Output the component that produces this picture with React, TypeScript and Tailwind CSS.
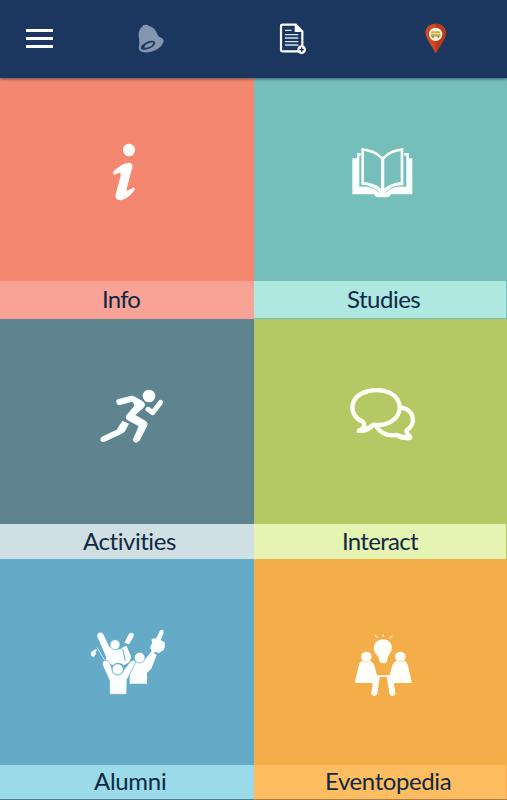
import type { ReactNode } from "react";

function InfoIcon() {
  return (
    <svg viewBox="0 0 210 240" className="ml-[90px] mt-[52px] h-20 w-[70px]" fill="#fffdf9">
      <ellipse cx="117" cy="60" rx="18" ry="19" />
      <path d="M68 127Q91 101 116 98Q129 98 127 112L110 176Q109 184 115 181L132 172L135 178Q120 202 97 210Q73 213 77 193L92 137Q93 125 86 129L72 135Z" />
    </svg>
  );
}

function BookIcon() {
  return (
    <svg viewBox="0 0 255 225" className="ml-[86px] mt-[57px] h-[75px] w-[85px]" fill="#fafffe">
      <path fillRule="evenodd" d="M64 39Q105 42 128 66Q150 42 190 39V150Q151 151 130 178H124Q104 151 64 149ZM72 48V141Q104 144 123 161V72Q101 51 72 48ZM182 48Q153 51 133 72V161Q151 144 182 141Z" />
      <path d="M51 54H62V62H58V155Q95 152 115 171Q127 181 139 171Q160 152 199 155V62H193V54H207V70H217V178H153Q150 187 140 187H115Q105 187 102 178H37V70H51Z" />
    </svg>
  );
}

function RunnerIcon() {
  return (
    <svg viewBox="0 0 255 210" className="ml-[90px] mt-[61px] h-[70px] w-[85px]" fill="none" stroke="#fbffff" strokeLinecap="round" strokeLinejoin="round">
      <circle cx="177" cy="48" r="19" fill="#fbffff" stroke="none" />
      <path d="M88 66L126 56L143 65" strokeWidth="18" />
      <path d="M123 49L153 61Q173 71 160 84L136 105L166 122Q177 129 170 140L148 184L128 180L146 139L113 121Q103 113 110 105L133 77Z" fill="#fbffff" stroke="none" />
      <path d="M162 137L138 179" strokeWidth="17" />
      <path d="M174 88L188 98L212 67" strokeWidth="15" />
      <path d="M97 122L117 131L105 154Q101 159 94 162L44 185Q31 188 31 177Q33 171 40 168L80 149Z" fill="#fbffff" stroke="none" />
    </svg>
  );
}

function ChatIcon() {
  return (
    <svg viewBox="0 0 255 210" className="ml-[86px] mt-[61px] h-[70px] w-[85px]" fill="none" stroke="#fdfff4" strokeWidth="13" strokeLinecap="round" strokeLinejoin="round">
      <path d="M183 82C224 90 230 130 200 151Q197 157 207 166L211 173Q191 177 171 165Q132 172 110 141" />
      <path d="M172 162L195 167L213 169L211 178Q191 181 174 174Z" fill="#fdfff4" strokeWidth="4" />
      <path d="M70 126C22 108 27 47 82 34C137 22 179 44 179 83C179 118 139 140 100 134Q80 151 57 151Q79 145 70 126Z" fill="#b4c964" />
      <path d="M72 131Q66 146 53 148L52 156Q79 161 100 141L104 132L89 138Q84 144 75 145Z" fill="#fdfff4" strokeWidth="4" />
    </svg>
  );
}

function AlumniIcon() {
  return (
    <svg viewBox="0 0 285 255" className="ml-20 mt-[61px] h-[85px] w-[95px]" fill="#fbffff">
      <path d="M52 50Q50 40 59 38Q67 36 71 45L87 79Q101 94 122 87L131 80L140 78L154 112L148 126L132 136Q115 120 98 136L76 123L79 112Z" />
      <path d="M128 86L136 122" fill="none" stroke="#65abc7" strokeWidth="3" />
      <circle cx="105" cy="74" r="15" stroke="#65abc7" strokeWidth="2" />
      <path d="M133 69L146 43Q152 35 160 41Q163 45 160 51L147 73Z" />
      <path d="M33 96L48 87L51 91L46 96L49 101L40 112L33 106Z" />
      <path d="M51 82L77 126" fill="none" stroke="#c8ecf7" strokeWidth="3" />
      <path d="M152 137L166 122Q180 137 194 119L215 94L230 105L214 146L201 158V191H149V163Z" />
      <circle cx="179" cy="113" r="16" stroke="#65abc7" strokeWidth="2" />
      <path d="M217 98L211 85Q210 77 217 70L214 60Q218 53 228 56L239 34Q244 26 250 31Q253 34 249 43L242 61L253 66Q258 79 250 91L235 100L229 96Z" />
      <path d="M68 136Q65 125 74 121Q82 119 88 128L99 151Q112 168 129 153L151 125Q160 117 167 123Q169 129 163 136L141 179L140 223H89V183Z" stroke="#65abc7" strokeWidth="2" />
      <circle cx="113" cy="148" r="17" stroke="#65abc7" strokeWidth="3" />
    </svg>
  );
}

function Person() {
  return (
    <>
      <ellipse cx="64" cy="95" rx="16" ry="15" />
      <path d="M52 107Q64 115 75 107Q86 112 89 124L96 151Q107 156 103 166L97 205Q95 213 86 213Q77 210 79 202L83 178Q83 174 79 174H32Q28 172 31 164L42 119Q44 110 52 107Z" />
    </>
  );
}

function MeetingIcon() {
  return (
    <svg viewBox="0 0 240 240" className="ml-[91px] mt-[66px] h-20 w-20" fill="#fffef8">
      <path d="M103 105Q101 95 93 88C78 67 90 46 111 43C135 42 146 62 138 80Q127 95 127 105Q128 114 115 115Q102 114 103 105Z" />
      <path d="M90 30L98 39M115 27V36M142 32L134 40" fill="none" stroke="#ffe3b0" strokeWidth="4" />
      <path d="M90 153H143" stroke="#fffef8" strokeWidth="5" />
      <Person />
      <g transform="translate(230 0) scale(-1 1)">
        <Person />
      </g>
    </svg>
  );
}

interface TileProps {
  tile: string;
  label: string;
  text: string;
  icon: ReactNode;
}

function Tile({ tile, label, text, icon }: TileProps) {
  return (
    <button className={`flex min-w-0 flex-col text-left ${tile}`}>
      <span className="block w-full flex-1">{icon}</span>
      <span className={`flex w-full items-center whitespace-nowrap text-2xl leading-none text-[#102943] ${label}`}>
        <span>{text}</span>
      </span>
    </button>
  );
}

function Header() {
  return (
    <header className="relative flex h-[78px] items-start bg-[#1c375f] shadow-[0_1px_3px_rgba(20,35,60,0.65)]">
      <button aria-label="Menu" className="ml-[26px] mt-[29px] flex w-[27px] flex-col gap-[5px]">
        <span className="h-[3px] bg-white" />
        <span className="h-[3px] bg-white" />
        <span className="h-[3px] bg-white" />
      </button>
      <svg viewBox="410 70 84 93" className="ml-[84px] mt-[23px] h-[31px] w-7" fill="#8495af">
        <path d="M427 80Q428 73 435 76Q439 74 446 79Q461 82 469 99Q472 111 484 115Q494 121 487 132C477 151 447 162 426 157Q412 153 416 139Q418 130 415 108Q413 91 427 80Z" />
        <ellipse cx="443" cy="137" rx="23" ry="10.5" transform="rotate(-24 443 137)" fill="#1c375f" />
        <path d="M431 143Q437 130 458 127Q460 138 446 142Q436 146 431 143Z" />
      </svg>
      <svg viewBox="75 69 84 96" className="ml-[114px] mt-[23px] h-8 w-7" fill="none">
        <path d="M86 74H125L145 94V151Q145 154 142 154H85Q81 154 81 150V79Q81 74 86 74Z" stroke="#fff" strokeWidth="6.5" />
        <path d="M122 74V96H145Z" fill="#fff" />
        <path d="M93 91H113M93 104H133M93 114H133M93 125H133M93 135H133" stroke="#d9e2ee" strokeWidth="4" />
        <circle cx="143" cy="149" r="13" fill="#fff" />
        <path d="M136 149H150M143 142V156" stroke="#1c375f" strokeWidth="4" />
      </svg>
      <svg viewBox="511 69 72 96" className="ml-[117px] mt-[23px] h-8 w-6">
        <path d="M546 71C524 71 510 88 517 108C521 121 536 141 546 160C557 140 571 121 576 107C581 87 567 71 546 71Z" fill="#d04a22" />
        <path d="M546 71C567 71 581 87 576 107C571 121 557 140 546 160Z" fill="#b9391d" />
        <circle cx="546" cy="103" r="20" fill="#fff5df" />
        <path d="M534 94H557L560 99V110H532V98Z" fill="#c3ad52" />
        <path d="M534 101H558" stroke="#eee0a0" strokeWidth="3" />
        <circle cx="538" cy="111" r="3" fill="#8f813a" />
        <circle cx="554" cy="111" r="3" fill="#8f813a" />
      </svg>
    </header>
  );
}

export default function App() {
  return (
    <div className="flex h-[800px] w-[507px] flex-col overflow-hidden font-['Lato','Open_Sans',sans-serif]">
      <Header />
      <main className="grid flex-1 grid-cols-[254px_253px] grid-rows-[241px_240px_241px]">
        <Tile tile="bg-[#f4876f]" label="h-[38px] bg-[#f9a296] pb-0.5 pl-[102px] tracking-[-0.8px]" text="Info" icon={<InfoIcon />} />
        <Tile tile="bg-[#76beba] pb-px pr-px" label="h-[37px] bg-[#aee8e1] pb-0.5 pl-[93px] tracking-[-0.5px]" text="Studies" icon={<BookIcon />} />
        <Tile tile="bg-[#5e8490]" label="h-[35px] bg-[#d0dfe4] pb-0.5 pl-[83px] tracking-[-0.45px]" text="Activities" icon={<RunnerIcon />} />
        <Tile tile="bg-[#b4c964] pr-px" label="h-[35px] bg-[#e5f4b2] pb-0.5 pl-[88px] tracking-[-0.7px]" text="Interact" icon={<ChatIcon />} />
        <Tile tile="border-b border-[#527b8d] bg-[#65abc7]" label="h-[34px] bg-[#9bdae8] pb-0.5 pl-[94px] tracking-[-0.3px]" text="Alumni" icon={<AlumniIcon />} />
        <Tile tile="border-b border-[#a87b48] bg-[#f3ae49] pr-px" label="h-[34px] bg-[#fdbd60] pb-0.5 pl-[71px] tracking-[-0.4px]" text="Eventopedia" icon={<MeetingIcon />} />
      </main>
    </div>
  );
}
